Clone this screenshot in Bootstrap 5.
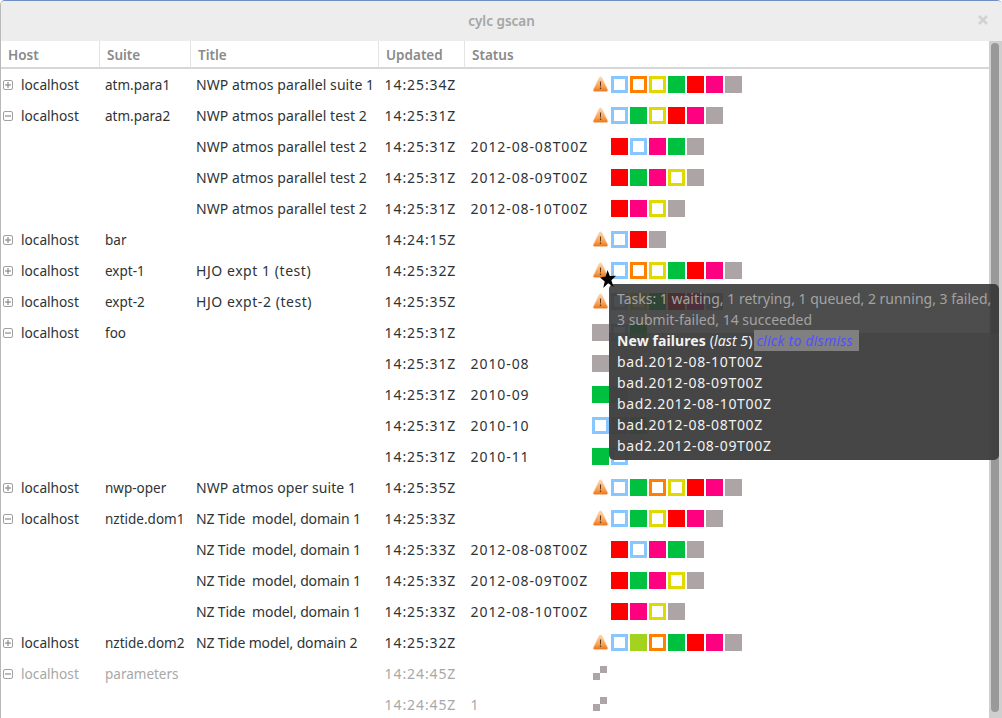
<!DOCTYPE html>
<html lang="en">
<head>
    <meta charset="UTF-8" />
    <meta name="viewport" content="width=device-width, initial-scale=1" />
    <title>cylc gscan</title>
    <link href="https://cdn.jsdelivr.net/npm/bootstrap@5.3.3/dist/css/bootstrap.min.css" rel="stylesheet">
    <style>
        html, body { height: 100%; overflow: hidden; }
        body { font-family: "Noto Sans", sans-serif; font-size: 14px; color: #2e3436; background: #fff; }
        .gs-window { height: 718px; border-left: 1px solid #b8b8b8; border-top: 1px solid #6f8fc4; border-radius: 5px 5px 0 0; position: relative; overflow: hidden; }
        .gs-title { height: 40px; background: #ededed; flex: none; font-size: 13.5px; }
        .gs-title-text { color: #a5a5a5; font-weight: 600; }
        .gs-close { right: 13px; top: 13px; width: 12px; height: 12px; }
        .gs-list { min-width: 0; overflow: hidden; }
        .gs-table { table-layout: fixed; width: 988px; margin: 0; font-size: inherit; border-collapse: separate; border-spacing: 0; --bs-table-color: #2e3436; }
        .gs-table th { height: 28px; padding: 2px 0 0 7px; font-size: 13.5px; font-weight: 600; color: #8a8a8a; border-bottom: 2px solid #d6d6d6; border-right: 1px solid #e4e4e4; vertical-align: middle; }
        .gs-table th.gs-last { border-right: 0; }
        .gs-table td { height: 31px; padding: 1px 0 0 6px; vertical-align: middle; white-space: pre; overflow: visible; }
        .gs-table tr.gs-faded td { color: #a8a8a8; }
        .gs-table td.gs-host { padding-left: 2px; font-size: 13.7px; }
        .gs-table td.gs-suite { font-size: 13.5px; padding-left: 5px; }
        .gs-table td.gs-name { letter-spacing: .07px; padding: 0 0 0 5px; }
        .gs-table td.gs-name-nz { letter-spacing: -.15px; }
        .gs-table td.gs-name-hjo { letter-spacing: .55px; }
        .gs-table td.gs-num { letter-spacing: .9px; padding: 0 0 0 5.6px; }
        .gs-table td.gs-dots { padding: 0; }
        .gs-expander { width: 10px; height: 10px; flex: none; margin-right: 8px; }
        .gs-cells { gap: 2px; height: 17px; }
        .gs-sq { width: 17px; height: 17px; flex: none; }
        .gs-ring { border: 3px solid; background: #fff; }
        .sq-b { border-color: #88c6ff; }
        .sq-o { border-color: #ff8000; }
        .sq-y { border-color: #dfd900; }
        .sq-g { background: #00c040; }
        .sq-r { background: #ff0000; }
        .sq-p { background: #ff0080; }
        .sq-k { background: #ada5a5; }
        .sq-l { background: #a4d31f; }
        .gs-scroll { width: 13px; flex: none; background: #cfcfcf; padding: 2px 3px 6px 2px; }
        .gs-thumb { height: 100%; background: #999; border-radius: 4px; }
        .gs-tip { left: 608px; top: 283px; width: 390px; height: 176px; background: linear-gradient(to bottom, rgba(50, 50, 50, .88) 49px, rgba(62, 62, 62, .96) 49px); border-radius: 5px; color: #f2f2f2; line-height: 21px; }
        .gs-tip-head { height: 49px; margin-bottom: -3px; padding: 4px 0 0 8px; width: 381px; color: #a3a3a3; background: rgba(255, 255, 255, .015); white-space: nowrap; }
        .gs-tip-body { padding: 0 0 0 8px; position: relative; }
        .gs-tip-new { letter-spacing: .1px; }
        .gs-tip-line { letter-spacing: .68px; }
        .gs-dismiss { background: #808080; color: #5050ff; font-style: italic; letter-spacing: .25px; padding: 0 6px 0 3px; display: inline-block; margin-left: 1px; }
        .gs-star { left: 599px; top: 269px; width: 17px; height: 19px; }
    </style>
</head>
<body>
    <div class="gs-window d-flex flex-column">
        <!-- TITLE BAR -->
        <div class="gs-title d-flex align-items-center justify-content-center position-relative">
            <span class="gs-title-text">cylc gscan</span>
            <svg class="gs-close position-absolute" viewBox="0 0 12 12"><path d="M2 2l8 8M10 2l-8 8" stroke="#d2d2d2" stroke-width="2.6" fill="none"/></svg>
        </div>
        <!-- LIST + SCROLLBAR -->
        <div class="d-flex flex-grow-1 overflow-hidden">
            <div class="gs-list flex-grow-1">
                <table class="table table-borderless gs-table">
                    <colgroup>
                        <col style="width:99px"><col style="width:91px"><col style="width:188px"><col style="width:86px"><col style="width:127px"><col>
                    </colgroup>
                    <thead>
                        <tr><th>Host</th><th>Suite</th><th>Title</th><th>Updated</th><th class="gs-last">Status</th><th class="gs-last"></th></tr>
                    </thead>
                    <tbody id="gs-rows"></tbody>
                </table>
            </div>
            <div class="gs-scroll"><div class="gs-thumb"></div></div>
        </div>

        <!-- TOOLTIP -->
        <div class="gs-tip position-absolute">
            <div class="gs-tip-head">Tasks: 1 waiting, 1 retrying, 1 queued, 2 running, 3 failed,<br>3 submit-failed, 14 succeeded</div>
            <div class="gs-tip-body">
                <div class="gs-tip-new"><strong>New failures</strong> (<em>last 5</em>)<span class="gs-dismiss">click to dismiss</span></div>
                <div class="gs-tip-line">bad.2012-08-10T00Z</div>
                <div class="gs-tip-line">bad.2012-08-09T00Z</div>
                <div class="gs-tip-line">bad2.2012-08-10T00Z</div>
                <div class="gs-tip-line">bad.2012-08-08T00Z</div>
                <div class="gs-tip-line">bad2.2012-08-09T00Z</div>
            </div>
        </div>
        <svg class="gs-star position-absolute" viewBox="0 0 18 20"><path d="M8 0l2.4 6.4L17 6l-5 4.8L14.5 18 8.6 14 3.4 19 5 12 0 8l6-1.2z" fill="#000"/></svg>
    </div>

    <script>
        const warn = `<svg class="gs-sq" viewBox="0 0 17 17"><defs><linearGradient id="w" x1="0" y1="0" x2="0" y2="1"><stop offset="0" stop-color="#ffd9b5"/><stop offset=".65" stop-color="#fb9f4e"/><stop offset="1" stop-color="#e8731a"/></linearGradient></defs><path d="M8.5 1c.7 0 1.1.4 1.4 1l5.7 11.6c.5 1-.1 2-1.2 2H2.600c-1.100 0-1.700-1-1.200-2L7.100 2c.3-.6.7-1 1.400-1z" fill="url(#w)" stroke="#f7c9a0" stroke-width=".6"/><path d="M7.900 5.500h1.200l-.2 5H8.100zM7.900 11.500h1.200V13H7.900z" fill="#5a3a1c"/></svg>`;
        const run = `<svg class="gs-sq" viewBox="0 0 17 17"><path d="M1 8h7v7H1zM8 1h7v7H8z" fill="#ada5a5"/></svg>`;
        const plus = `<svg class="gs-expander" viewBox="0 0 10 10"><rect x=".5" y=".5" width="9" height="9" rx="1.5" fill="#fff" stroke="#a0a0a0"/><path d="M2 5h6M5 2v6" stroke="#777" fill="none"/></svg>`;
        const minus = `<svg class="gs-expander" viewBox="0 0 10 10"><rect x=".5" y=".5" width="9" height="9" rx="1.5" fill="#fff" stroke="#a0a0a0"/><path d="M2 5h6" stroke="#777" fill="none"/></svg>`;

        // expander, suite, title, updated, status, cells (! warning, _ blank, * running)
        const nwp2 = "NWP atmos parallel test 2", tide1 = "NZ Tide  model, domain 1";
        const rows = [
            ["+", "atm.para1", "NWP atmos parallel suite 1", "14:25:34Z", "", "!boygrpk"],
            ["-", "atm.para2", nwp2, "14:25:31Z", "", "!bgyrpk"],
            ["", "", nwp2, "14:25:31Z", "2012-08-08T00Z", "_rbpgk"],
            ["", "", nwp2, "14:25:31Z", "2012-08-09T00Z", "_rgpyk"],
            ["", "", nwp2, "14:25:31Z", "2012-08-10T00Z", "_rpyk"],
            ["+", "bar", "", "14:24:15Z", "", "!brk"],
            ["+", "expt-1", "HJO expt 1 (test)", "14:25:32Z", "", "!boygrpk"],
            ["+", "expt-2", "HJO expt-2 (test)", "14:25:35Z", "", "!bygrpk"],
            ["-", "foo", "", "14:25:31Z", "", "kbg"],
            ["", "", "", "14:25:31Z", "2010-08", "k"],
            ["", "", "", "14:25:31Z", "2010-09", "gk"],
            ["", "", "", "14:25:31Z", "2010-10", "bkg"],
            ["", "", "", "14:25:31Z", "2010-11", "gb"],
            ["+", "nwp-oper", "NWP atmos oper suite 1", "14:25:35Z", "", "!bgoyrpk"],
            ["-", "nztide.dom1", tide1, "14:25:33Z", "", "!bgyrpk"],
            ["", "", tide1, "14:25:33Z", "2012-08-08T00Z", "_rbpgk"],
            ["", "", tide1, "14:25:33Z", "2012-08-09T00Z", "_rgpyk"],
            ["", "", tide1, "14:25:33Z", "2012-08-10T00Z", "_rpyk"],
            ["+", "nztide.dom2", "NZ Tide model, domain 2", "14:25:32Z", "", "!blogrpk"],
            ["-", "parameters", "", "14:24:45Z", "", "*", 1],
            ["", "", "", "14:24:45Z", "1", "*", 1]
        ];

        function sel(c) {
            if (c === "!") return warn;
            if (c === "*") return run;
            if (c === "_") return '<span class="gs-sq"></span>';
            const ring = "boy".includes(c) ? " gs-ring" : "";
            return `<span class="gs-sq sq-${c}${ring}"></span>`;
        }

        function nameClass(t) {
            if (t.startsWith("NZ")) return "gs-name gs-name-nz";
            if (t.startsWith("HJO")) return "gs-name gs-name-hjo";
            return "gs-name";
        }

        document.getElementById("gs-rows").innerHTML = rows.map(r => {
            const exp = r[0] === "+" ? plus : r[0] === "-" ? minus : "";
            const host = exp ? `<div class="d-flex align-items-center">${exp}localhost</div>` : "";
            const cells = [...r[5]].map(sel).join("");
            return `<tr class="${r[6] ? "gs-faded" : ""}"><td class="gs-host">${host}</td><td class="gs-suite">${r[1]}</td><td class="${nameClass(r[2])}">${r[2]}</td><td class="gs-num">${r[3]}</td><td class="gs-num">${r[4]}</td><td class="gs-dots"><div class="d-flex gs-cells">${cells}</div></td></tr>`;
        }).join("");
    </script>
</body>
</html>
